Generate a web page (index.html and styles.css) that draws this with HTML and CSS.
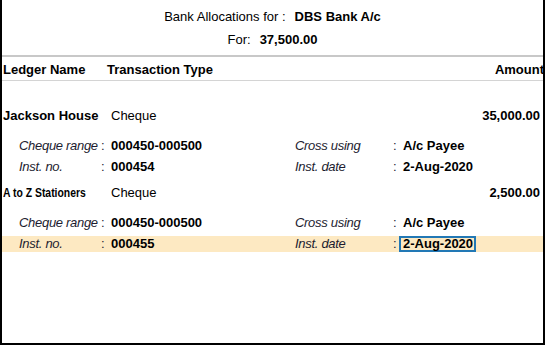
FILE: index.html
```html
<!DOCTYPE html>
<html>
  <head>
    <meta charset="utf-8" />
    <title>Bank Allocations</title>
    <link rel="stylesheet" href="styles.css">
  </head>
  <body>
    <div class="screen">
      <!-- en-tête -->
      <div class="head">
        <div class="head-line">
          <span>Bank Allocations for :</span>
          <span class="strong">DBS Bank A/c</span>
        </div>
        <div class="head-line">
          <span>For:</span>
          <span class="strong">37,500.00</span>
        </div>
      </div>

      <div class="cols">
        <span>Ledger Name</span>
        <span>Transaction Type</span>
        <span class="amount">Amount</span>
      </div>

      <div class="list">
        <div class="ledger first">
          <span class="name">Jackson House</span>
          <span>Cheque</span>
          <span class="amount">35,000.00</span>
        </div>
        <div class="detail top">
          <span class="label">Cheque range</span><span class="colon">:</span><span class="value">000450-000500</span>
          <span class="label">Cross using</span><span class="colon">:</span><span class="value">A/c Payee</span>
        </div>
        <div class="detail">
          <span class="label">Inst. no.</span><span class="colon">:</span><span class="value">000454</span>
          <span class="label">Inst. date</span><span class="colon">:</span><span class="value">2-Aug-2020</span>
        </div>

        <div class="ledger">
          <span class="name"><span class="narrow">A to Z Stationers</span></span>
          <span>Cheque</span>
          <span class="amount">2,500.00</span>
        </div>
        <div class="detail top">
          <span class="label">Cheque range</span><span class="colon">:</span><span class="value">000450-000500</span>
          <span class="label">Cross using</span><span class="colon">:</span><span class="value">A/c Payee</span>
        </div>
        <div class="detail selected">
          <span class="label">Inst. no.</span><span class="colon">:</span><span class="value">000455</span>
          <span class="label">Inst. date</span><span class="colon">:</span><span class="value"><span class="field">2-Aug-2020</span></span>
        </div>
      </div>
    </div>
  </body>
</html>
```

FILE: styles.css
```css
body {
  margin: 0;
  font-family: "Liberation Sans", Arial, sans-serif;
  font-size: 13px;
  color: #000;
  background-color: #fff;
}

.screen {
  width: 545px;
  height: 345px;
  box-sizing: border-box;
  border: 2px solid #000;
  border-top: none;
  overflow: hidden;
}

.strong {
  font-weight: bold;
}

/* en-tête */
.head {
  padding: 5px 0 4px;
  border-bottom: 2px solid #c8c8c8;
}
.head-line {
  height: 23px;
  line-height: 23px;
  display: flex;
  justify-content: center;
  gap: 9px;
}

.cols {
  display: grid;
  grid-template-columns: 104px 1fr auto;
  height: 21px;
  line-height: 21px;
  padding: 2px 0 0 1px;
  border-bottom: 1px solid #d4d4d4;
  font-weight: bold;
}
.cols .amount {
  margin-right: -1px;
}

/* lignes */
.ledger {
  display: grid;
  grid-template-columns: 108px 1fr auto;
  height: 16px;
  line-height: 16px;
  padding: 0 3px 0 1px;
  margin-top: 10px;
  white-space: nowrap;
}
.ledger.first {
  margin-top: 27px;
}
.ledger .name,
.ledger .amount {
  font-weight: bold;
}
.narrow {
  display: inline-block;
  transform: scaleX(0.8);
  transform-origin: left center;
}

.detail {
  display: grid;
  grid-template-columns: 82px 10px 184px 98px 10px 1fr;
  height: 16px;
  line-height: 16px;
  padding-left: 17px;
  margin-top: 5px;
  white-space: nowrap;
}
.detail.top {
  margin-top: 14px;
}
.detail .label {
  font-style: italic;
  letter-spacing: -0.3px;
  color: #1c1c30;
}
.detail .colon {
  color: #1c1c30;
}
.detail .value {
  font-weight: bold;
}
.detail.selected {
  background-color: #fde9c2;
}
.field {
  display: inline-block;
  height: 12px;
  line-height: 12px;
  margin-left: -4px;
  padding: 0 1px 0 2px;
  border: 2px solid #2278b5;
}
```
